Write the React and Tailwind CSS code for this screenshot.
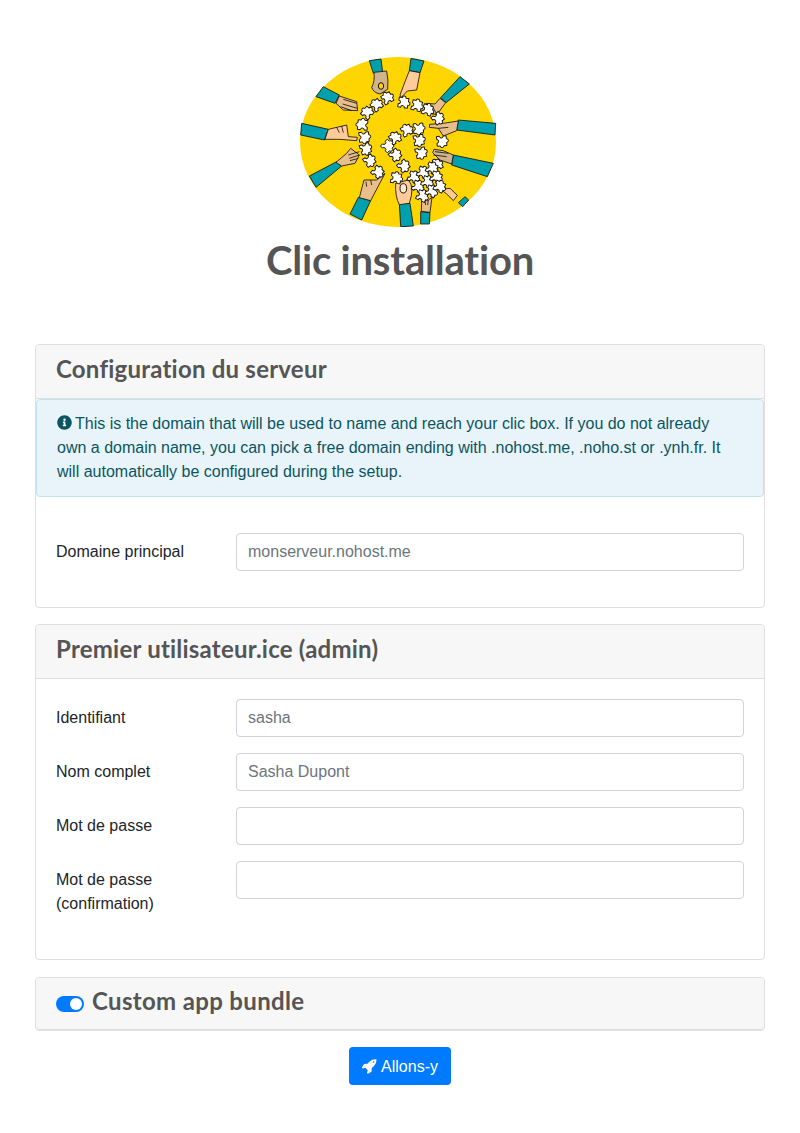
import React from "react";
import { FaInfoCircle } from "react-icons/fa";

const TEAL = "#00a0ae";
const PEACH = "#ffcc99";
const TAN = "#e8bf8a";
const BROWN = "#d2b48c";

const arms = [
  "268,62 303,57 308,97 280,100",
  "393,55 432,63 420,98 388,92",
  "540,110 568,132 498,188 482,173",
  "535,240 647,250 645,285 530,270",
  "520,345 640,370 622,410 515,375",
  "535,488 555,470 566,480 548,500",
  "422,515 450,518 448,552 422,552",
  "358,490 390,490 400,558 362,560",
  "235,472 272,482 245,540 210,522",
  "88,408 170,365 185,378 108,442",
  "65,250 145,268 133,300 62,285",
  "130,140 178,165 165,190 108,170",
];

const hands = [
  ["M282 97 L320 93 Q326 120 323 148 L300 162 Q280 158 275 142 Q285 125 282 97Z", BROWN],
  ["M388 92 L420 98 L410 150 L382 153 L364 172 L360 165 L375 125Z", PEACH],
  ["M480 175 L497 188 L470 225 L445 215 L438 190 L465 192Z", TAN],
  ["M535 243 L530 272 L490 288 L475 265 L448 262 L449 253 L490 250Z", TAN],
  ["M520 345 L515 372 L480 360 L458 338 L462 328 L490 332Z", BROWN],
  ["M482 448 L510 445 L532 466 L520 482 L500 462Z", PEACH],
  ["M424 514 L450 517 L456 472 L445 480 L425 482Z", TAN],
  ["M358 494 Q345 470 347 430 L385 420 Q405 440 388 490Z", PEACH],
  ["M238 473 L272 482 L315 400 L290 420 L252 420Z", TAN],
  ["M168 367 L185 378 L225 370 L238 345 L212 325 L200 340Z", TAN],
  ["M145 268 L200 255 L205 290 L232 292 L230 302 L180 298 L135 298Z", PEACH],
  ["M178 168 L230 185 L233 212 L190 210 L168 190Z", TAN],
];

const details =
  "M190 178 L230 190 M188 192 L232 205 M182 200 L215 212 " +
  "M170 262 L178 278 M185 258 L190 278 " +
  "M205 345 L238 335 M208 355 L238 345 M210 362 L235 355 " +
  "M260 440 L258 425 M275 435 L272 420 " +
  "M455 195 L470 222 M448 200 L460 225 " +
  "M475 265 L505 262 " +
  "M460 345 L500 350 M465 335 L505 340 " +
  "M435 482 L437 495 M445 480 L443 495";

const pieces = [
  [322, 175, -30], [290, 196, -40], [262, 219, -50], [248, 255, -85], [252, 291, 85], [256, 326, 70],
  [268, 362, 55], [292, 396, 40], [370, 188, 10], [410, 197, 15], [442, 210, 20], [473, 235, 50],
  [485, 303, 85], [470, 376, -30], [415, 265, 85], [380, 272, -25], [345, 295, -30], [322, 318, 45],
  [345, 345, 50], [370, 378, 50], [416, 300, 80], [422, 338, 75], [348, 415, 10],
  [400, 412, 25], [428, 398, 25], [455, 385, 25], [413, 440, 25], [441, 426, 25], [468, 412, 25],
  [426, 468, 25], [454, 454, 25], [478, 440, 25],
];

const PIECE =
  "M-13 -13 H-5 A5 5 0 1 1 5 -13 H13 V-5 A5 5 0 1 1 13 5 V13 H5 A5 5 0 1 0 -5 13 H-13 V5 A5 5 0 1 0 -13 -5 Z";

function Logo() {
  return (
    <svg viewBox="60 51 600 510" width="200" height="170" className="block mx-auto">
      <ellipse cx="354" cy="306" rx="294" ry="255" fill="#ffd500" />
      {arms.map((p, i) => (
        <polygon key={i} points={p} fill={TEAL} stroke="#111" strokeWidth="2.5" />
      ))}
      {hands.map(([d, c], i) => (
        <path key={i} d={d} fill={c} stroke="#111" strokeWidth="2.5" strokeLinejoin="round" />
      ))}
      <path d={details} fill="none" stroke="#111" strokeWidth="2.5" />
      <ellipse cx="303" cy="138" rx="8" ry="10" fill="#ffd500" stroke="#111" strokeWidth="3" />
      <ellipse cx="370" cy="445" rx="10" ry="14" fill="#ffe9cc" stroke="#111" strokeWidth="3" />
      {pieces.map(([x, y, r], i) => (
        <path
          key={i}
          d={PIECE}
          transform={`translate(${x} ${y}) rotate(${r}) scale(1.12)`}
          fill="#fff"
          stroke="#111"
          strokeWidth="2.5"
        />
      ))}
    </svg>
  );
}

const HEAD = "font-['Lato',sans-serif] font-bold text-[#555]";
const H2 = `${HEAD} text-2xl leading-[1.2] tracking-[0.22px]`;

function CardHeader({ children }) {
  return (
    <div className="bg-[#f7f7f7] border-b border-[#dfdfdf] px-5 pt-[10px] pb-[14px] rounded-t">
      <h2 className={H2}>{children}</h2>
    </div>
  );
}

function Field({ label, placeholder, type = "text" }) {
  return (
    <div className="flex mb-4">
      <label className="w-[180px] shrink-0 py-[7px] pr-4 leading-6 text-[#212529]">{label}</label>
      <input
        type={type}
        placeholder={placeholder}
        className="w-[508px] h-[38px] pl-[11px] pr-3 border border-[#ced4da] rounded bg-white text-[#495057] placeholder:text-[#6c757d] outline-none"
      />
    </div>
  );
}

export default function App() {
  return (
    <div className="w-[800px] min-h-[1133px] bg-white px-[35px] pt-[57px] pb-12 font-['Liberation_Sans',Arial,sans-serif] text-base leading-6 text-[#212529]">
      <Logo />
      <h1 className={`${HEAD} text-center text-[40px] leading-[48px] tracking-[-0.2px] mt-[9px] mb-[60px]`}>Clic installation</h1>

      <section className="border border-[#dfdfdf] rounded mb-4">
        <CardHeader>Configuration du serveur</CardHeader>
        <div className="bg-[#e8f4fa] border border-[#bee5eb] rounded text-[#0c5460] pl-5 pr-6 py-3">
          <FaInfoCircle className="inline-block w-[15px] h-[15px] align-[-1.5px] mr-[3px]" />
          This is the domain that will be used to name and reach your clic box. If you do not already own a domain name, you can pick a free domain ending with .nohost.me, .noho.st or .ynh.fr. It will automatically be configured during the setup.
        </div>
        <div className="px-5 pt-9 pb-5">
          <Field label="Domaine principal" placeholder="monserveur.nohost.me" />
        </div>
      </section>

      <section className="border border-[#dfdfdf] rounded mb-[17px]">
        <CardHeader>Premier utilisateur.ice (admin)</CardHeader>
        <div className="px-5 pt-5 pb-5">
          <Field label="Identifiant" placeholder="sasha" />
          <Field label="Nom complet" placeholder="Sasha Dupont" />
          <Field label="Mot de passe" type="password" />
          <Field label="Mot de passe (confirmation)" type="password" />
        </div>
      </section>

      <section className="border border-[#dfdfdf] rounded mb-4">
        <div className="bg-[#f7f7f7] border-b border-[#dfdfdf] px-5 pt-[9px] pb-[13.2px] rounded flex items-start">
          <span className="relative w-7 h-4 rounded-full bg-[#007bff] mt-[9px] mr-2 shrink-0">
            <span className="absolute right-[2px] top-[2px] w-3 h-3 rounded-full bg-white" />
          </span>
          <h2 className={`${H2} tracking-[0.34px]`}>Custom app bundle</h2>
        </div>
      </section>

      <div className="flex justify-center">
        <button className="h-[38px] pl-3 pr-[13px] pt-[2px] rounded bg-[#007bff] text-white flex items-center gap-1">
          <svg viewBox="0 0 1792 1792" width="16" height="16" fill="currentColor" className="-mt-[2px]">
            <path d="M1504 448q0-40-28-68t-68-28-68 28-28 68 28 68 68 28 68-28 28-68zm224-288q0 249-75.500 430.500t-253.500 360.500q-81 80-195 176l-20 379q-2 16-16 26l-384 224q-7 4-16 4-12 0-23-9l-64-64q-13-14-8-32l85-276-281-281-276 85q-3 1-9 1-14 0-23-9l-64-64q-17-19-5-39l224-384q10-14 26-16l379-20q96-114 176-195 188-187 358-258t431-71q14 0 24 9.500t10 22.500z" />
          </svg>
          Allons-y
        </button>
      </div>
    </div>
  );
}
